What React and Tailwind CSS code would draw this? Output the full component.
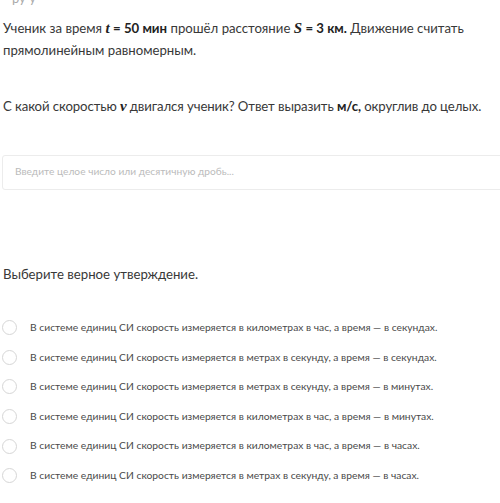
import React from 'react'

const options = [
  'В системе единиц СИ скорость измеряется в километрах в час, а время — в секундах.',
  'В системе единиц СИ скорость измеряется в метрах в секунду, а время — в секундах.',
  'В системе единиц СИ скорость измеряется в метрах в секунду, а время — в минутах.',
  'В системе единиц СИ скорость измеряется в километрах в час, а время — в минутах.',
  'В системе единиц СИ скорость измеряется в километрах в час, а время — в часах.',
  'В системе единиц СИ скорость измеряется в метрах в секунду, а время — в часах.',
]

function V({ children }) {
  return <span className="font-bold italic text-[15px] leading-none text-[#222]" style={{ fontFamily: '"Liberation Serif", serif' }}>{children}</span>
}

function B({ children }) {
  return <span className="font-bold text-[#222]">{children}</span>
}

export default function App() {
  return (
    <div className="w-[500px] h-[503px] overflow-hidden bg-white text-[#383838]" style={{ fontFamily: 'Lato, "Noto Sans", sans-serif' }}>
      <div className="h-[10px] relative">
        <span className="absolute left-[12px] top-[-11px] text-[13px] text-[#aaa]">ру у</span>
      </div>
      <div className="px-[3px] text-[13.2px] leading-[21.5px] pt-[8px]">
        <p>
          Ученик за время <V>t</V> <B>= 50 мин</B> прошёл расстояние <V>S</V> <B>= 3 км.</B> Движение считать прямолинейным равномерным.
        </p>
        <p className="mt-[35px] whitespace-nowrap tracking-[-0.1px]">
          С какой скоростью <V>v</V> двигался ученик? Ответ выразить <B>м/с,</B> округлив до целых.
        </p>
      </div>
      <div className="mt-[37px] ml-[2px] w-[510px] h-[35px] border border-[#ececec] rounded-[3px] flex items-center pl-[12px]">
        <span className="text-[10.2px] text-[#bbb]">Введите целое число или десятичную дробь...</span>
      </div>
      <p className="mt-[75px] px-[3px] text-[13.2px]">Выберите верное утверждение.</p>
      <div className="mt-[35px] flex flex-col gap-[12.6px]">
        {options.map((o, i) => (
          <div key={i} className="flex items-center h-[17px]">
            <div className="w-[15px] h-[15px] rounded-full border-[1.5px] border-[#d6d6d6] ml-[2px] shrink-0" />
            <span className="ml-[13px] text-[10.3px] text-[#4a4a4a] whitespace-nowrap">{o}</span>
          </div>
        ))}
      </div>
    </div>
  )
}
